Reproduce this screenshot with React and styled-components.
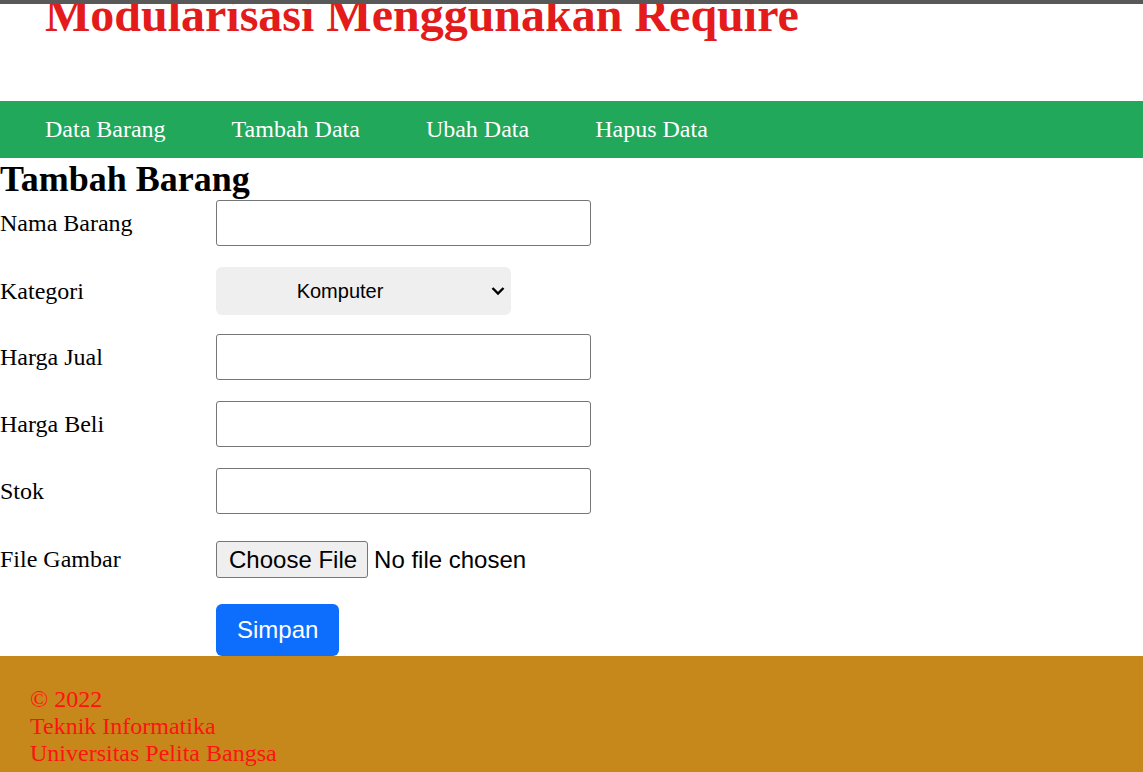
import React from "react";
import styled, { createGlobalStyle } from "styled-components";

const GlobalStyle = createGlobalStyle`
  html, body { margin: 0; padding: 0; background: #ffffff; }
  body {
    font-family: "Liberation Serif", "Times New Roman", serif;
    font-size: 24px;
    color: #000000;
  }
  * { box-sizing: border-box; }
`;

const Header = styled.header`
  border-top: 4px solid #585858;
  height: 101px;
  padding: 0 45px;
  overflow: hidden;
`;

const Title = styled.h1`
  margin: -17px 0 0;
  font-size: 48px;
  font-weight: bold;
  line-height: normal;
  color: #e31b1b;
  white-space: nowrap;
`;

const Nav = styled.nav`
  display: flex;
  align-items: center;
  height: 57px;
  padding-left: 12px;
  background: #21a85a;
`;

const NavLink = styled.a`
  padding: 0 33px;
  color: #ffffff;
  font-size: 24px;
  text-decoration: none;
`;

const Main = styled.main`
  display: flex;
  flex-direction: column;
`;

const SectionTitle = styled.h2`
  margin: 0;
  font-size: 36px;
  font-weight: bold;
  line-height: normal;
`;

const FormRow = styled.div`
  display: flex;
  align-items: center;
  margin-bottom: ${(p) => p.$gap}px;
`;

const Label = styled.label`
  width: 216px;
  flex: none;
  font-size: 24px;
`;

const TextInput = styled.input`
  width: 375px;
  height: 46px;
  border: 1px solid #767676;
  border-radius: 3px;
  background: #ffffff;
  font-size: 20px;
  padding: 0 8px;
`;

const SelectWrap = styled.div`
  position: relative;
  width: 295px;
  height: 48px;
`;

const Select = styled.select`
  appearance: none;
  -webkit-appearance: none;
  width: 100%;
  height: 100%;
  border: none;
  border-radius: 6px;
  background: #efefef;
  font-family: "Liberation Sans", Arial, sans-serif;
  font-size: 20px;
  color: #000000;
  padding: 0 47px 0 0;
  text-align: center;
  text-align-last: center;
`;

const Chevron = styled.svg`
  position: absolute;
  right: 6px;
  top: 50%;
  transform: translateY(-50%);
  pointer-events: none;
`;

const FileField = styled.div`
  display: flex;
  align-items: center;
  gap: 6px;
  font-family: "Liberation Sans", Arial, sans-serif;
  font-size: 24px;
`;

const FileButton = styled.label`
  display: flex;
  align-items: center;
  height: 37px;
  padding: 0 10px 0 12px;
  background: #efefef;
  border: 1px solid #767676;
  border-radius: 3px;
  cursor: pointer;
`;

const HiddenFile = styled.input`
  display: none;
`;

const SubmitButton = styled.button`
  height: 52px;
  padding: 0 21px;
  border: none;
  border-radius: 6px;
  background: #0d6efd;
  color: #ffffff;
  font-family: "Liberation Sans", Arial, sans-serif;
  font-size: 24px;
`;

const Spacer = styled.div`
  width: 216px;
  flex: none;
`;

const Footer = styled.footer`
  background: #c6881a;
  color: #ff1212;
  padding: 30px 30px 24px;
  font-size: 24px;
  line-height: normal;
`;

const FooterLine = styled.div``;

export default function App() {
  return (
    <>
      <GlobalStyle />
      <Header>
        <Title>Modularisasi Menggunakan Require</Title>
      </Header>
      <Nav>
        <NavLink href="#">Data Barang</NavLink>
        <NavLink href="#">Tambah Data</NavLink>
        <NavLink href="#">Ubah Data</NavLink>
        <NavLink href="#">Hapus Data</NavLink>
      </Nav>
      <Main>
        <SectionTitle>Tambah Barang</SectionTitle>
        <form onSubmit={(e) => e.preventDefault()}>
          <FormRow $gap={21}>
            <Label>Nama Barang</Label>
            <TextInput type="text" />
          </FormRow>
          <FormRow $gap={19}>
            <Label>Kategori</Label>
            <SelectWrap>
              <Select defaultValue="Komputer">
                <option>Komputer</option>
                <option>Elektronik</option>
                <option>Hand Phone</option>
              </Select>
              <Chevron width="14" height="9" viewBox="0 0 14 9">
                <path d="M1.5 1.5 L7 7 L12.5 1.5" fill="none" stroke="#000" strokeWidth="2.4" />
              </Chevron>
            </SelectWrap>
          </FormRow>
          <FormRow $gap={21}>
            <Label>Harga Jual</Label>
            <TextInput type="text" />
          </FormRow>
          <FormRow $gap={21}>
            <Label>Harga Beli</Label>
            <TextInput type="text" />
          </FormRow>
          <FormRow $gap={27}>
            <Label>Stok</Label>
            <TextInput type="text" />
          </FormRow>
          <FormRow $gap={26}>
            <Label>File Gambar</Label>
            <FileField>
              <FileButton>
                Choose File
                <HiddenFile type="file" />
              </FileButton>
              <span>No file chosen</span>
            </FileField>
          </FormRow>
          <FormRow $gap={0}>
            <Spacer />
            <SubmitButton type="submit">Simpan</SubmitButton>
          </FormRow>
        </form>
      </Main>
      <Footer>
        <FooterLine>© 2022</FooterLine>
        <FooterLine>Teknik Informatika</FooterLine>
        <FooterLine>Universitas Pelita Bangsa</FooterLine>
      </Footer>
    </>
  );
}
